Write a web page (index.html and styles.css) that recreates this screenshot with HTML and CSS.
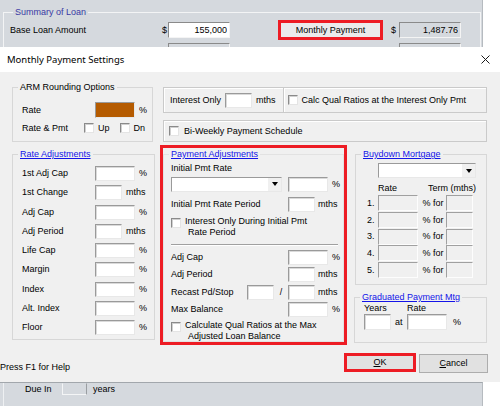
FILE: index.html
```html
<!DOCTYPE html>
<html lang="en">
<head>
    <meta charset="UTF-8">
    <meta name="viewport" content="width=device-width, initial-scale=1.0">
    <title>Monthly Payment Settings</title>
    <link rel="stylesheet" href="styles.css">
</head>
<body>
  <div class="app_top">
    <fieldset class="summary">
      <legend>Summary of Loan</legend>
      <div class="sum_row">
        <span class="sum_label">Base Loan Amount</span>
        <span class="dollar">$</span>
        <input class="sum_box" value="155,000">
        <button class="pay_btn">Monthly Payment</button>
        <span class="dollar dollar2">$</span>
        <input class="sum_box ro" value="1,487.76" readonly>
      </div>
      <div class="sum_row sum_row2">
        <span class="sum_label"></span>
        <span class="dollar"></span>
        <input class="sum_box ro">
        <span class="pay_gap"></span>
        <span class="dollar dollar2"></span>
        <input class="sum_box ro">
      </div>
    </fieldset>
  </div>

  <div class="dialog">
    <div class="title_bar">
      <span class="title">Monthly Payment Settings</span>
      <svg class="close" width="9" height="9" viewBox="0 0 9 9">
        <path d="M0.5 0.5 L8.5 8.5 M8.5 0.5 L0.5 8.5" stroke="#1a1a1a" stroke-width="1" fill="none"/>
      </svg>
    </div>

    <div class="dlg_body">
      <!-- top row -->
      <div class="row1">
        <fieldset class="gb arm">
          <legend>ARM Rounding Options</legend>
          <div class="arm_body">
            <div class="line">
              <span class="lbl" style="width:73px">Rate</span>
              <input class="tb w40 brown">
              <span class="unit">%</span>
            </div>
            <div class="line line2">
              <span class="lbl" style="width:62px">Rate &amp; Pmt</span>
              <input type="checkbox" class="cb">
              <span class="cb_txt">Up</span>
              <input type="checkbox" class="cb dn">
              <span class="cb_txt">Dn</span>
            </div>
          </div>
        </fieldset>

        <div class="right_stack">
          <div class="panel io_panel">
            <span class="io_lbl">Interest Only</span>
            <input class="tb w27">
            <span class="unit">mths</span>
            <span class="vsep"></span>
            <input type="checkbox" class="cb">
            <span class="cb_txt">Calc Qual Ratios at the Interest Only Pmt</span>
          </div>
          <div class="panel bw_panel">
            <input type="checkbox" class="cb">
            <span class="cb_txt bw_txt">Bi-Weekly Payment Schedule</span>
          </div>
        </div>
      </div>

      <!-- middle row -->
      <div class="row2">
        <fieldset class="gb rate_adj">
          <legend class="link">Rate Adjustments</legend>
          <div class="ra_body">
            <div class="ra_row"><span class="lbl">1st Adj Cap</span><input class="tb w40"><span class="unit">%</span></div>
            <div class="ra_row"><span class="lbl">1st Change</span><input class="tb w27"><span class="unit">mths</span></div>
            <div class="ra_row"><span class="lbl">Adj Cap</span><input class="tb w40"><span class="unit">%</span></div>
            <div class="ra_row"><span class="lbl">Adj Period</span><input class="tb w27"><span class="unit">mths</span></div>
            <div class="ra_row"><span class="lbl">Life Cap</span><input class="tb w40"><span class="unit">%</span></div>
            <div class="ra_row"><span class="lbl">Margin</span><input class="tb w40"><span class="unit">%</span></div>
            <div class="ra_row"><span class="lbl">Index</span><input class="tb w40"><span class="unit">%</span></div>
            <div class="ra_row"><span class="lbl">Alt. Index</span><input class="tb w40"><span class="unit">%</span></div>
            <div class="ra_row"><span class="lbl">Floor</span><input class="tb w40"><span class="unit">%</span></div>
          </div>
        </fieldset>

        <div class="red_box">
          <fieldset class="gb pay_adj">
            <legend class="link">Payment Adjustments</legend>
            <div class="pa_body">
              <div class="pa_caption">Initial Pmt Rate</div>
              <div class="pa_row pa_combo_row">
                <div class="combo"><span class="arrow"></span></div>
                <input class="tb w40 pa_pct_box">
                <span class="unit">%</span>
              </div>
              <div class="pa_row pa_period">
                <span class="lbl pa_lbl">Initial Pmt Rate Period</span>
                <input class="tb w27">
                <span class="unit u3">mths</span>
              </div>
              <div class="cb_block">
                <input type="checkbox" class="cb">
                <span class="cb_multi">Interest Only During Initial Pmt<br>Rate Period</span>
              </div>
              <div class="hsep"></div>
              <div class="pa_row pa_first">
                <span class="lbl pa_lbl">Adj Cap</span>
                <input class="tb w40">
                <span class="unit">%</span>
              </div>
              <div class="pa_row">
                <span class="lbl pa_lbl">Adj Period</span>
                <input class="tb w27">
                <span class="unit u3">mths</span>
              </div>
              <div class="pa_row">
                <span class="lbl recast_lbl">Recast Pd/Stop</span>
                <input class="tb w27">
                <span class="slash">/</span>
                <input class="tb w27">
                <span class="unit u3">mths</span>
              </div>
              <div class="pa_row">
                <span class="lbl pa_lbl">Max Balance</span>
                <input class="tb w40">
                <span class="unit">%</span>
              </div>
              <div class="cb_block cb_block2">
                <input type="checkbox" class="cb">
                <span class="cb_multi">Calculate Qual Ratios at the Max<br>Adjusted Loan Balance</span>
              </div>
            </div>
          </fieldset>
        </div>

        <div class="right_col">
          <fieldset class="gb buydown">
            <legend class="link">Buydown Mortgage</legend>
            <div class="bd_body">
              <div class="combo bd_combo"><span class="arrow"></span></div>
              <div class="bd_head"><span class="bd_rate">Rate</span><span>Term (mths)</span></div>
              <div class="bd_grid">
                <span class="num">1.</span><input class="tb w40 dis" disabled><span class="for">% for</span><input class="tb w27 dis" disabled>
                <span class="num">2.</span><input class="tb w40 dis" disabled><span class="for">% for</span><input class="tb w27 dis" disabled>
                <span class="num">3.</span><input class="tb w40 dis" disabled><span class="for">% for</span><input class="tb w27 dis" disabled>
                <span class="num">4.</span><input class="tb w40 dis" disabled><span class="for">% for</span><input class="tb w27 dis" disabled>
                <span class="num">5.</span><input class="tb w40 dis" disabled><span class="for">% for</span><input class="tb w27 dis" disabled>
              </div>
            </div>
          </fieldset>

          <fieldset class="gb graduated">
            <legend class="link">Graduated Payment Mtg</legend>
            <div class="gp_body">
              <div class="gp_head"><span class="gp_years">Years</span><span>Rate</span></div>
              <div class="gp_row">
                <input class="tb w27 gp_box">
                <span class="gp_at">at</span>
                <input class="tb w40 gp_box">
                <span class="gp_pct">%</span>
              </div>
            </div>
          </fieldset>
        </div>
      </div>

      <!-- buttons -->
      <div class="row3">
        <span class="help">Press F1 for Help</span>
        <div class="ok_wrap"><button class="btn ok_btn"><u>O</u>K</button></div>
        <button class="btn cancel_btn"><u>C</u>ancel</button>
      </div>
    </div>
  </div>

  <div class="app_bottom">
    <div class="due_row">
      <span class="due_lbl">Due In</span>
      <span class="due_box"></span>
      <span class="due_unit">years</span>
    </div>
  </div>
</body>
</html>
```

FILE: styles.css
```css
*{
  margin:0;
  padding:0;
  box-sizing: border-box;
}
body{
  width: 500px;
  height: 406px;
  overflow: hidden;
  background: #fff;
  font: 9px/11px "Liberation Sans", Arial, sans-serif;
  color: #000;
}
input, button{
  font: inherit;
  color: #000;
}

/* background window */
.app_top{
  width: 483px;
  height: 47px;
  background: #d5d9de;
  border-right: 1px solid #b6bbc0;
  padding: 6px 0 0 3px;
  overflow: hidden;
}
.summary{
  width: 478px;
  height: 70px;
  min-width: 0;
  border: 1px solid #f3f4f5;
  padding: 4px 0 0 6px;
}
.summary legend{
  margin-left: 3px;
  padding: 0 2px;
  line-height: 12px;
  color: #3a3aa4;
}
.sum_row{
  display: flex;
  align-items: center;
  height: 16px;
}
.sum_row2{
  margin-top: 5px;
}
.sum_label{
  width: 152px;
}
.dollar{
  width: 6px;
}
.dollar2{
  margin-left: 8px;
  margin-right: 2px;
}
.sum_box{
  appearance: none;
  width: 62px;
  height: 16px;
  background: #fff;
  border: 1px solid;
  border-color: #8a8a8a #f4f4f4 #f4f4f4 #8a8a8a;
  text-align: right;
  padding-right: 2px;
  outline: none;
}
.sum_box.ro{
  background: #d5d9de;
}
.pay_btn{
  margin-left: 48px;
  width: 105px;
  height: 20px;
  border: 3px solid #ed1c24;
  background: #ebebeb;
  text-align: center;
}
.pay_gap{
  width: 153px;
}

/* dialog */
.title_bar{
  height: 25px;
  background: #fff;
  display: flex;
  align-items: center;
  justify-content: space-between;
  padding: 0 10px 0 7px;
}
.title{
  font-family: "Noto Sans", sans-serif;
  font-size: 9.5px;
}
.dlg_body{
  height: 310px;
  background: #f0f0f0;
  padding: 9px 12px 0 12px;
}

.gb{
  min-width: 0;
  border: 1px solid #d7d7d7;
  padding: 0;
}
.gb legend{
  margin-left: 5px;
  padding: 0 2px;
  line-height: 12px;
}
.gb legend.link{
  color: #1414e8;
  text-decoration: underline;
}

.line{
  display: flex;
  align-items: center;
  height: 16px;
}
.lbl{
  flex: none;
}
.unit{
  margin-left: 4px;
}
.u3{
  margin-left: 3px;
}

/* text boxes & checkboxes */
.tb{
  appearance: none;
  flex: none;
  height: 15px;
  background: #fff;
  border: 1px solid;
  border-color: #9a9a9a #e8e8e8 #e8e8e8 #9a9a9a;
  box-shadow: inset 1px 1px 0 #dadada;
  outline: none;
}
.w40{ width: 40px; }
.w27{ width: 27px; }
.tb.brown{
  height: 16px;
  background: #b55b00;
  box-shadow: none;
}
.tb.dis{
  height: 16px;
  background: #f0f0f0;
  border-color: #a0a0a0 #fdfdfd #fdfdfd #a0a0a0;
  box-shadow: none;
}
.cb{
  appearance: none;
  flex: none;
  width: 10px;
  height: 10px;
  background: #fff;
  border: 1px solid;
  border-color: #8a8a8a #e4e4e4 #e4e4e4 #8a8a8a;
  box-shadow: inset 1px 1px 0 #d0d0d0;
  margin: 0;
}
.cb_txt{
  margin-left: 4px;
}

/* row 1 */
.row1{
  display: flex;
  height: 61px;
}
.arm{
  width: 141px;
  height: 61px;
}
.arm_body{
  padding: 9px 0 0 9px;
}
.line2{
  margin-top: 2px;
}
.dn{
  margin-left: 10px;
}
.right_stack{
  margin-left: 10px;
  width: 324px;
  padding-top: 6px;
  display: flex;
  flex-direction: column;
  gap: 7px;
}
.panel{
  display: flex;
  align-items: center;
  border: 1px solid #cacaca;
  box-shadow: inset 1px 1px 0 #fff;
}
.io_panel{
  height: 26px;
  padding-left: 6px;
}
.io_lbl{
  margin-right: 4px;
}
.vsep{
  align-self: stretch;
  width: 2px;
  margin: 0 3px 0 7px;
  border-left: 1px solid #cacaca;
  border-right: 1px solid #fff;
}
.bw_panel{
  height: 22px;
  padding-left: 5px;
}
.bw_txt{
  margin-left: 5px;
}

/* row 2 */
.row2{
  display: flex;
  align-items: flex-start;
  margin-top: 3px;
  height: 200px;
}
.rate_adj{
  margin-top: 3px;
  width: 143px;
  height: 192px;
}
.ra_body{
  padding: 4px 0 0 9px;
}
.ra_row{
  display: flex;
  align-items: center;
  height: 19.25px;
}
.ra_row .lbl{
  width: 73px;
}
.ra_row .tb{
  height: 15px;
}

.red_box{
  margin-left: 5px;
  width: 187px;
  height: 200px;
  border: 3px solid #ed1c24;
}
.pay_adj{
  width: 100%;
  height: 100%;
  border-color: #e2e2e2;
}
.pa_body{
  padding: 3px 0 0 7px;
}
.pa_combo_row{
  margin-top: 1px;
}
.pa_row{
  display: flex;
  align-items: center;
  height: 15px;
  margin-top: 2.5px;
}
.pa_period{
  margin-top: 5px;
}
.pa_lbl{
  width: 117px;
}
.pa_pct_box{
  margin-left: 6px;
}
.combo{
  flex: none;
  width: 111px;
  height: 15px;
  background: #fff;
  border: 1px solid;
  border-color: #9a9a9a #e8e8e8 #e8e8e8 #9a9a9a;
  display: flex;
  justify-content: flex-end;
}
.arrow{
  width: 14px;
  height: 100%;
  background: #f0f0f0;
  border-left: 1px solid #fff;
  display: flex;
  align-items: center;
  justify-content: center;
}
.arrow::after{
  content: "";
  border-top: 4px solid #000;
  border-left: 3.5px solid transparent;
  border-right: 3.5px solid transparent;
}
.cb_block{
  display: flex;
  align-items: flex-start;
  margin-top: 4px;
}
.cb_block .cb{
  margin-top: 2px;
}
.cb_multi{
  margin-left: 4px;
  padding-left: 3px;
  text-indent: -3px;
}
.hsep{
  width: 167px;
  height: 2px;
  margin-top: 6px;
  border-top: 1px solid #a0a0a0;
  border-bottom: 1px solid #fff;
}
.pa_first{
  margin-top: 4px;
}
.recast_lbl{
  width: 76px;
}
.slash{
  width: 14px;
  text-align: center;
}
.cb_block2{
  margin-top: 2.5px;
}

.right_col{
  margin-left: 7px;
  width: 133px;
  display: flex;
  flex-direction: column;
}
.buydown{
  margin: 3px 0 0 1px;
  width: 132px;
  height: 137px;
}
.bd_body{
  padding: 3px 0 0 22px;
}
.bd_combo{
  width: 98px;
}
.bd_head{
  display: flex;
  margin-top: 4.5px;
}
.bd_rate{
  width: 50px;
}
.bd_grid{
  display: grid;
  grid-template-columns: 11px 40px 27.5px 27px;
  grid-auto-rows: 16.7px;
  align-items: center;
  margin: 1.5px 0 0 -11px;
}
.for{
  padding-left: 4.5px;
}

.graduated{
  margin-top: 6px;
  width: 133px;
  height: 52px;
}
.gp_body{
  padding: 0 0 0 9px;
}
.gp_head{
  display: flex;
}
.gp_years{
  width: 43px;
}
.gp_row{
  display: flex;
  align-items: center;
  height: 16px;
}
.gp_box{
  height: 16px;
}
.gp_at{
  width: 16px;
  padding-left: 4px;
}
.gp_pct{
  margin-left: 6px;
}

/* buttons */
.row3{
  display: flex;
  align-items: flex-start;
  margin-top: 8px;
  height: 20px;
}
.help{
  align-self: flex-end;
  margin-left: -12px;
  margin-right: auto;
}
.ok_wrap{
  width: 72px;
  height: 19px;
  border: 3px solid #ed1c24;
}
.btn{
  background: #e1e1e1;
  text-align: center;
}
.btn u{
  text-decoration: underline;
}
.ok_btn{
  width: 100%;
  height: 100%;
  border: none;
}
.cancel_btn{
  margin: 1px 0 0 3px;
  width: 69px;
  height: 19px;
  border: 1px solid #adadad;
}

/* background window, bottom */
.app_bottom{
  width: 483px;
  height: 24px;
  background: #d5d9de;
  border-top: 1px solid #a2a7ac;
  border-right: 1px solid #b6bbc0;
  padding-left: 3px;
}
.due_row{
  display: flex;
  align-items: flex-start;
  height: 100%;
  border-left: 1px solid #eef0f2;
  padding-left: 21px;
}
.due_lbl{
  margin-top: 0.5px;
  width: 37px;
}
.due_box{
  width: 25px;
  height: 12px;
  border: 1px solid;
  border-color: #d5d9de #9a9ea2 #f4f5f6 #f4f5f6;
}
.due_unit{
  margin: 0.5px 0 0 6px;
}
```
